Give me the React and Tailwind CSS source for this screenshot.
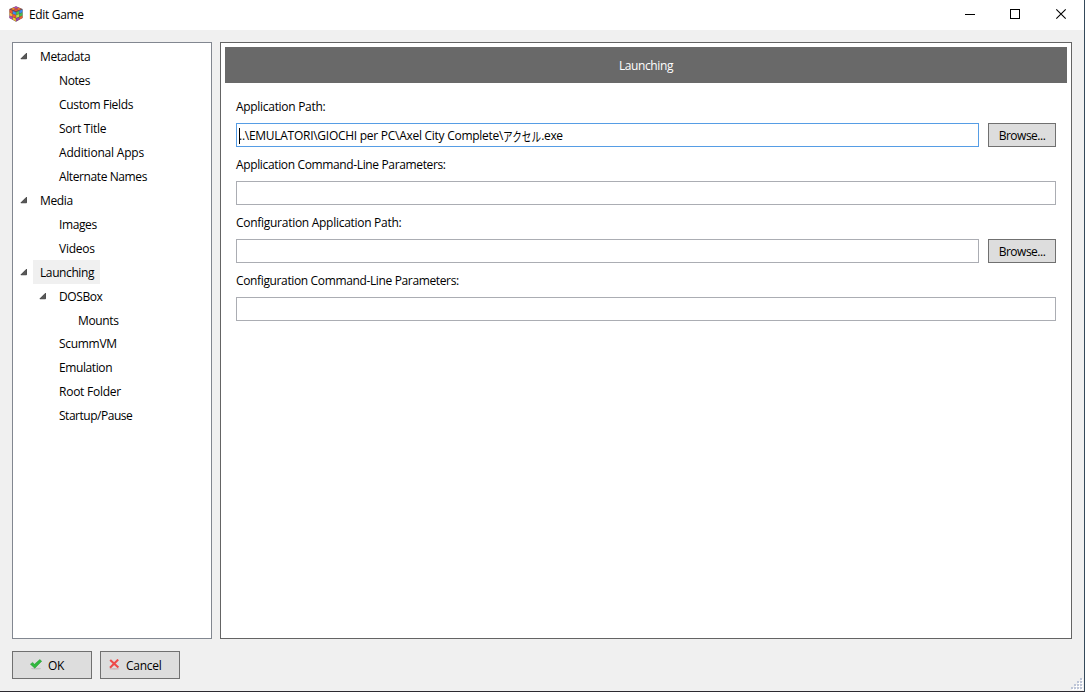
import React from "react";

const TREE = [
  { label: "Metadata", level: 0, open: true, spacing: "tracking-[-0.4px]" },
  { label: "Notes", level: 1, spacing: "tracking-[-0.4px]" },
  { label: "Custom Fields", level: 1, spacing: "tracking-[-0.33px]" },
  { label: "Sort Title", level: 1, spacing: "tracking-[-0.25px]" },
  { label: "Additional Apps", level: 1, spacing: "tracking-[-0.2px]" },
  { label: "Alternate Names", level: 1, spacing: "tracking-[-0.4px]" },
  { label: "Media", level: 0, open: true, spacing: "tracking-[-0.35px]" },
  { label: "Images", level: 1, spacing: "tracking-[-0.4px]" },
  { label: "Videos", level: 1, spacing: "tracking-[-0.25px]" },
  { label: "Launching", level: 0, open: true, selected: true, spacing: "tracking-[-0.4px]" },
  { label: "DOSBox", level: 1, open: true, spacing: "tracking-[-0.4px]" },
  { label: "Mounts", level: 2, short: true, spacing: "tracking-[-0.35px]" },
  { label: "ScummVM", level: 1, spacing: "tracking-[-0.3px]" },
  { label: "Emulation", level: 1, spacing: "tracking-[-0.4px]" },
  { label: "Root Folder", level: 1, spacing: "tracking-[-0.25px]" },
  { label: "Startup/Pause", level: 1, spacing: "tracking-[-0.48px]" },
];

const INDENT = ["pl-0", "pl-[19px]", "pl-[38px]"];

function Expander() {
  return (
    <svg width="8" height="8" viewBox="0 0 8 8" className="block">
      <path d="M0.9 6.8 L6.5 1.2 V6.8 Z" fill="#595959" stroke="#262626" strokeWidth="0.7" />
    </svg>
  );
}

function TreeRow({ item }) {
  return (
    <div className={`flex items-stretch ${INDENT[item.level]} ${item.short ? "h-[23px]" : "h-6"}`}>
      <div className="w-5 pl-[7px] pt-2">{item.open && <Expander />}</div>
      <div className={`flex items-start px-[7px] pt-[5px] ${item.selected ? "w-[67px] bg-[#f0f0f0]" : ""}`}>
        <span className={`leading-4 whitespace-nowrap ${item.spacing}`}>{item.label}</span>
      </div>
    </div>
  );
}

function Cube() {
  return (
    <svg width="14" height="16" viewBox="0 0 14 16">
      <path d="M7 0.3 L13.6 3 V12 L7 15.7 L0.4 12 V3 Z" fill="#6b4a50" />
      <path d="M7 0.5 L9.4 1.6 L7 2.7 L4.6 1.6 Z" fill="#b04ab8" />
      <path d="M4.3 1.7 L6.7 2.8 L4.3 3.9 L1.8 2.9 Z" fill="#f28a2a" />
      <path d="M9.7 1.7 L12.2 2.9 L9.7 4 L7.3 2.9 Z" fill="#f0703a" />
      <path d="M7 3 L9.4 4.1 L7 5.3 L4.6 4.1 Z" fill="#ee4a3a" />
      <path d="M0.6 3.5 L3.5 4.8 V7.6 L0.6 6.3 Z" fill="#ee5c2c" />
      <path d="M3.8 4.9 L6.8 6.2 V9 L3.8 7.7 Z" fill="#3a8df0" />
      <path d="M0.6 6.6 L3.5 7.9 V10.7 L0.6 9.4 Z" fill="#f6b42a" />
      <path d="M3.8 8 L6.8 9.3 V12.1 L3.8 10.8 Z" fill="#f4552f" />
      <path d="M0.6 9.8 L3.5 11.1 V13.4 L0.6 11.9 Z" fill="#b146bd" />
      <path d="M3.8 11.3 L6.8 12.5 V15.2 L3.8 13.6 Z" fill="#f6cc2c" />
      <path d="M7.2 6.2 L10.1 4.9 V7.7 L7.2 9 Z" fill="#4cc846" />
      <path d="M10.4 4.8 L13.4 3.5 V6.3 L10.4 7.6 Z" fill="#3a8df0" />
      <path d="M7.2 9.3 L10.1 8 V10.8 L7.2 12.1 Z" fill="#c4dc44" />
      <path d="M10.4 7.9 L13.4 6.6 V9.4 L10.4 10.7 Z" fill="#44bd52" />
      <path d="M7.2 12.5 L10.1 11.2 V13.6 L7.2 15.2 Z" fill="#9a42b4" />
      <path d="M10.4 11.1 L13.4 9.8 V11.9 L10.4 13.4 Z" fill="#ee632c" />
    </svg>
  );
}

function Label({ children, spacing }) {
  return <div className={`h-[18px] leading-[18px] whitespace-nowrap ${spacing}`}>{children}</div>;
}

function Field({ children, focused }) {
  return (
    <div className={`flex h-6 flex-1 items-center border bg-white pl-[2px] pt-px ${focused ? "border-[#569de5]" : "border-[#abadb3]"}`}>
      {children}
    </div>
  );
}

function Browse() {
  return (
    <button className="ml-[9px] flex h-6 w-[68px] items-center justify-center border border-[#707070] bg-[#dddddd] pt-px tracking-[-0.5px]">
      Browse...
    </button>
  );
}

function Grip() {
  const dots = [[9, 0], [6, 3], [9, 3], [3, 6], [6, 6], [9, 6], [0, 9], [3, 9], [6, 9], [9, 9]];
  return (
    <svg width="12" height="12" shapeRendering="crispEdges" className="absolute bottom-[1px] right-[1px]">
      {dots.map(([x, y]) => (
        <g key={`${x}-${y}`}>
          <rect x={x + 1} y={y + 1} width="2" height="2" fill="#ffffff" />
          <rect x={x} y={y} width="2" height="2" fill="#bdc5d7" />
        </g>
      ))}
    </svg>
  );
}

export default function App() {
  return (
    <div className="h-[692px] w-[1086px] overflow-hidden bg-white pr-px font-['Open_Sans','Noto_Sans_CJK_JP',sans-serif] text-[12px] text-black">
      <div className="relative flex h-full flex-col border-b border-r border-b-[#2c2930] border-r-[#34495a] bg-[#f0f0f0]">
        <header className="flex h-[30px] shrink-0 items-center bg-white pl-[9px]">
          <div className="-mt-[3px]"><Cube /></div>
          <span className="ml-[6px] tracking-[-0.33px]">Edit Game</span>
          <svg width="120" height="30" viewBox="0 0 120 30" className="ml-auto" fill="none" stroke="#000">
            <path d="M1 14.5 H11" />
            <rect x="46.5" y="9.5" width="9" height="9" />
            <path d="M92.3 9.3 L101.7 18.7 M101.7 9.3 L92.3 18.7" strokeWidth="1.1" />
          </svg>
        </header>

        <main className="flex h-[609px] shrink-0 gap-2 pl-3 pr-3 pt-3">
          <nav className="w-[200px] border border-[#828790] bg-white pt-px">
            {TREE.map((item) => <TreeRow key={item.label} item={item} />)}
          </nav>

          <section className="flex-1 border border-[#646464] bg-white p-1">
            <h1 className="flex h-9 items-center justify-center bg-[#696969] pt-[2px] tracking-[-0.4px] text-white">Launching</h1>
            <div className="px-[11px] pt-[15px]">
              <Label spacing="tracking-[-0.3px]">Application Path:</Label>
              <div className="mb-[9px] mt-[7px] flex">
                <Field focused>
                  <span className="-mr-px h-4 w-px bg-black" />
                  <span className="whitespace-nowrap tracking-[-0.27px]">..\EMULATORI\GIOCHI per PC\Axel City Complete\</span>
                  <span className="w-[38px] whitespace-nowrap text-[13px] leading-4"><span className="inline-block origin-left scale-x-[0.74]">アクセル</span></span>
                  <span className="tracking-[-0.35px]">.exe</span>
                </Field>
                <Browse />
              </div>
              <Label spacing="tracking-[-0.36px]">Application Command-Line Parameters:</Label>
              <div className="mb-[9px] mt-[7px] flex"><Field /></div>
              <Label spacing="tracking-[-0.28px]">Configuration Application Path:</Label>
              <div className="mb-[9px] mt-[7px] flex"><Field /><Browse /></div>
              <Label spacing="tracking-[-0.36px]">Configuration Command-Line Parameters:</Label>
              <div className="mt-[7px] flex"><Field /></div>
            </div>
          </section>
        </main>

        <footer className="flex gap-2 pl-3 pt-3">
          <button className="flex h-7 w-20 items-center border border-[#707070] bg-[#dddddd] pl-[17px]">
            <svg width="12" height="12" viewBox="0 0 12 12">
              <ellipse cx="6" cy="9.6" rx="5" ry="0.9" fill="#c2c2c2" />
              <path d="M0.4 5.2 L2.6 3.4 L4.5 5.2 L9.8 0.6 L11.7 2.2 L4.8 9.2 Z" fill="#31b93f" stroke="#249533" strokeWidth="0.5" />
            </svg>
            <span className="ml-[6px] pt-px tracking-[-0.25px]">OK</span>
          </button>
          <button className="flex h-7 w-20 items-center border border-[#707070] bg-[#dddddd] pl-[8px]">
            <svg width="12" height="12" viewBox="0 0 12 12">
              <ellipse cx="5.4" cy="9.8" rx="5" ry="0.9" fill="#d0b8b8" />
              <path d="M1.2 1 L9.4 8.6 M9.2 0.6 L1 8.8" stroke="#ee4a48" strokeWidth="2.1" />
            </svg>
            <span className="ml-[5px] pt-px tracking-[-0.25px]">Cancel</span>
          </button>
        </footer>
        <Grip />
      </div>
    </div>
  );
}
